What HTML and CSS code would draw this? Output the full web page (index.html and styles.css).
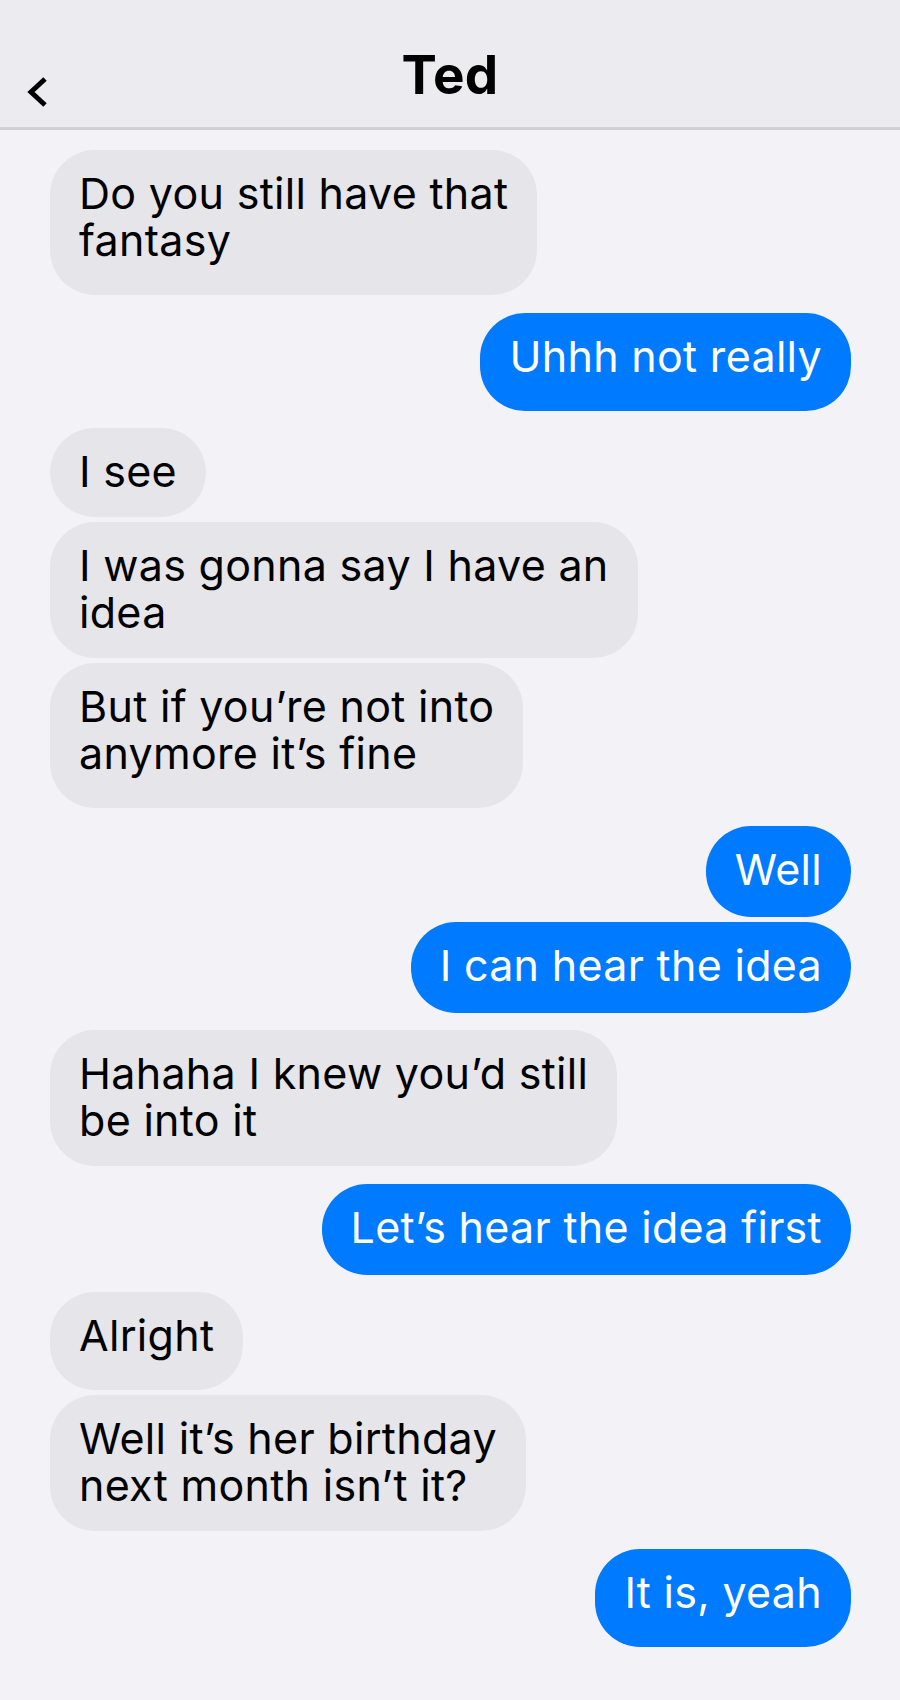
FILE: index.html
```html
<!DOCTYPE html>
<html lang="en">
<head>
    <meta charset="UTF-8">
    <meta name="viewport" content="width=device-width, initial-scale=1.0">
    <title>Ted</title>
    <link rel="stylesheet" href="styles.css">
</head>
<body>
    <header class="nav-bar">
        <a class="back" href="#" aria-label="Back">
            <svg width="22" height="32" viewBox="0 0 22 32">
                <polyline points="19,3 5,16 19,29" fill="none" stroke="#000" stroke-width="5" stroke-linejoin="miter"/>
            </svg>
        </a>
        <h1 class="title">Ted</h1>
        <span></span>
    </header>

    <main class="chat">
        <div class="group them">
            <div class="bubble tall">Do you still have that<br>fantasy</div>
        </div>
        <div class="group me">
            <div class="bubble tall">Uhhh not really</div>
        </div>
        <div class="group them">
            <div class="bubble">I see</div>
            <div class="bubble">I was gonna say I have an<br>idea</div>
            <div class="bubble tall">But if you’re not into<br>anymore it’s fine</div>
        </div>
        <div class="group me">
            <div class="bubble mid">Well</div>
            <div class="bubble mid">I can hear the idea</div>
        </div>
        <div class="group them">
            <div class="bubble">Hahaha I knew you’d still<br>be into it</div>
        </div>
        <div class="group me">
            <div class="bubble mid">Let’s hear the idea first</div>
        </div>
        <div class="group them">
            <div class="bubble tall">Alright</div>
            <div class="bubble">Well it’s her birthday<br>next month isn’t it?</div>
        </div>
        <div class="group me">
            <div class="bubble tall">It is, yeah</div>
        </div>
    </main>
</body>
</html>
```

FILE: styles.css
```css
body {
    margin: 0;
    background-color: #f2f2f7;
    font-family: Inter, "Noto Sans", sans-serif;
    color: #000;
}

.nav-bar {
    display: grid;
    grid-template-columns: 1fr auto 1fr;
    align-items: start;
    height: 130px;
    box-sizing: border-box;
    padding: 49px 0 0 0;
    background-color: #ebebf0;
    border-bottom: 3px solid #d0d0d5;
}

.back {
    display: block;
    width: 22px;
    margin: 27px 0 0 26px;
}

.back svg {
    display: block;
}

.title {
    margin: 0;
    font-size: 53px;
    line-height: 53px;
    font-weight: 700;
    letter-spacing: 0.3px;
}

.chat {
    display: flex;
    flex-direction: column;
    gap: 17.5px;
    padding: 20px 49px 40px 50px;
}

.group {
    display: flex;
    flex-direction: column;
    gap: 5px;
}

.them {
    align-items: flex-start;
}

.me {
    align-items: flex-end;
}

.bubble {
    max-width: 660px;
    padding: 20px 29px 22px 29px;
    border-radius: 45px;
    font-size: 43px;
    line-height: 47px;
    letter-spacing: 0.3px;
}

.bubble.mid {
    padding-bottom: 24px;
}

.bubble.tall {
    padding-bottom: 31px;
}

.them .bubble {
    background-color: #e5e5ea;
    color: #000;
}

.me .bubble {
    background-color: #007aff;
    color: #fff;
}
```
